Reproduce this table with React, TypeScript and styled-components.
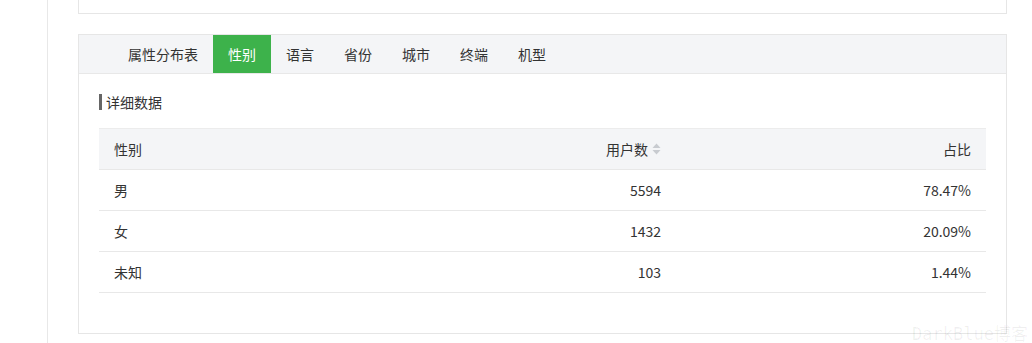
import React from "react";
import styled, { createGlobalStyle } from "styled-components";

interface Row {
  name: string;
  users: number;
  ratio: string;
}

const rows: Row[] = [
  { name: "男", users: 5594, ratio: "78.47%" },
  { name: "女", users: 1432, ratio: "20.09%" },
  { name: "未知", users: 103, ratio: "1.44%" },
];

const tabs = ["属性分布表", "性别", "语言", "省份", "城市", "终端", "机型"];

const GlobalStyle = createGlobalStyle`
  html, body {
    margin: 0;
    padding: 0;
    background: #fff;
  }
  body {
    font-family: "Microsoft YaHei", "Noto Sans CJK SC", "Noto Sans", sans-serif;
    font-size: 14px;
    color: #333;
  }
`;

function App(): JSX.Element {
  return (
    <Page>
      <GlobalStyle />
      <Sidebar />
      <Main>
        <TopCard />
        <Card>
          <TabBar>
            {tabs.map((t, i) => (
              <Tab key={t} active={i === 1}>
                {t}
              </Tab>
            ))}
          </TabBar>
          <CardBody>
            <Heading>详细数据</Heading>
            <Table>
              <HeadRow>
                <Cell>性别</Cell>
                <Cell align="right">
                  用户数
                  <SortIcon width="9" height="12" viewBox="0 0 9 12">
                    <path d="M4.5 0.5 L8.5 5 L0.5 5 Z" />
                    <path d="M0.5 7 L8.5 7 L4.5 11.5 Z" />
                  </SortIcon>
                </Cell>
                <Cell align="right">占比</Cell>
              </HeadRow>
              {rows.map((r) => (
                <BodyRow key={r.name}>
                  <Cell>{r.name}</Cell>
                  <Cell align="right">{r.users}</Cell>
                  <Cell align="right">{r.ratio}</Cell>
                </BodyRow>
              ))}
            </Table>
          </CardBody>
        </Card>
      </Main>
      <Watermark>DarkBlue博客</Watermark>
    </Page>
  );
}

const Page = styled.div`
  position: relative;
  display: flex;
  height: 343px;
  overflow: hidden;
`;

const Sidebar = styled.aside`
  width: 47px;
  flex-shrink: 0;
  border-right: 1px solid #e8e8e8;
`;

const Main = styled.main`
  flex: 1;
  padding: 0 25px 0 30px;
`;

const TopCard = styled.div`
  height: 13px;
  border: 1px solid #e6e6e6;
  border-top: none;
  background: #fff;
`;

const Card = styled.section`
  margin-top: 20px;
  border: 1px solid #e6e6e6;
  background: #fff;
`;

const TabBar = styled.nav`
  display: flex;
  height: 38px;
  padding-left: 34px;
  background: #f4f5f7;
  border-bottom: 1px solid #e8e8e8;
`;

const Tab = styled.div<{ active?: boolean }>`
  display: flex;
  align-items: center;
  padding: 0 15px;
  color: ${(p) => (p.active ? "#fff" : "#333")};
  background: ${(p) => (p.active ? "#3db24b" : "transparent")};
  cursor: pointer;
`;

const CardBody = styled.div`
  padding: 20px 20px 40px;
`;

const Heading = styled.h3`
  margin: 0 0 18px;
  height: 16px;
  line-height: 16px;
  font-size: 14px;
  font-weight: normal;
  color: #333;
  border-left: 3px solid #666;
  padding-left: 4px;
`;

const Table = styled.div`
  display: flex;
  flex-direction: column;
`;

const HeadRow = styled.div`
  display: grid;
  grid-template-columns: 1fr 1fr 310px;
  height: 40px;
  align-items: center;
  background: #f4f5f7;
  border-top: 1px solid #ececec;
  border-bottom: 1px solid #e8e8e8;
`;

const BodyRow = styled.div`
  display: grid;
  grid-template-columns: 1fr 1fr 310px;
  height: 40px;
  align-items: center;
  border-bottom: 1px solid #e8e8e8;
`;

const Cell = styled.div<{ align?: string }>`
  display: flex;
  align-items: center;
  justify-content: ${(p) => (p.align === "right" ? "flex-end" : "flex-start")};
  padding: 0 15px;
`;

const SortIcon = styled.svg`
  margin-left: 4px;
  fill: #c8cbd0;
`;

const Watermark = styled.div`
  position: absolute;
  right: 4px;
  bottom: -2px;
  font-family: "DejaVu Sans Mono", "Noto Sans CJK SC", monospace;
  font-size: 17px;
  color: rgba(0, 0, 0, 0.06);
  pointer-events: none;
`;

export default App;
